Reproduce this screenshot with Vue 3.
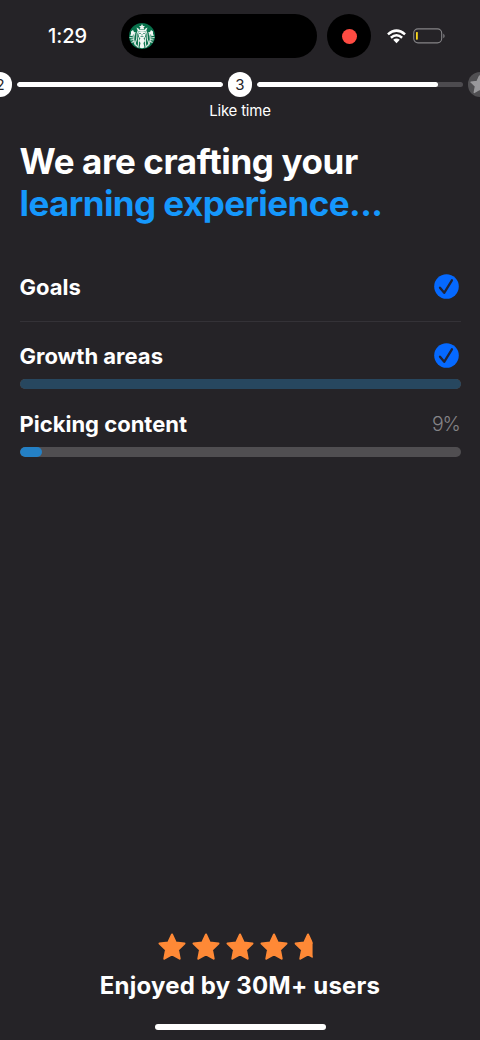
<script setup>
const tasks = [
  { name: 'Goals', kind: 'goals', done: true },
  { name: 'Growth areas', kind: 'growth', done: true, progress: 100 },
  { name: 'Picking content', kind: 'picking', done: false, progress: 5 },
]
const star = 'M14 1.500 17.700 9.500 26.500 10.500 20 16.700 21.700 25.700 14 21.300 6.300 25.700 8 16.700 1.500 10.500 10.300 9.500Z'
</script>

<template>
  <main class="screen">
    <header class="status">
      <span class="time">1:29</span>
      <div class="island">
        <svg class="logo" viewBox="0 0 52 52">
          <circle cx="26" cy="26" r="26" fill="#08704b" />
          <g fill="none" stroke="#d9e9e1" stroke-width="2.2">
            <path d="M18 16C13 24 18 29 14 36S15 45 19 49M34 16c5 8 0 13 4 20s-1 9-5 13" />
            <path d="M20 28c-3 6 1 9-2 19M32 28c3 6-1 9 2 19M12 21c-4 6-3 18 1 24M40 21c4 6 3 18-1 24" />
            <path d="M2 24l7 2M1 29l8 1M3 34l7-1M5 39l6-3M50 24l-7 2M51 29l-8 1M49 34l-7-1M47 39l-6-3" />
          </g>
          <g fill="#f2f7f4">
            <path d="M26 2l2 4h4l-3 3 2 4h-10l2-4-3-3h4zM15 9l4 2 2 3h10l2-3 4-2-3 8H18z" />
            <path d="M4 17l4-3 2 4 4 1-4 4-6 2zM48 17l-4-3-2 4-4 1 4 4 6 2z" />
            <path d="M18 19q8-5 16 0l-2 9q-6 7-12 0z" />
            <path d="M22 31q4-3 8 0l2 5-3 4 2 9q-5 3-10 0l2-9-3-4z" />
          </g>
          <path d="M20 21h4M28 21h4M26 22v3M23 27h6" stroke="#08704b" stroke-width="1.3" />
        </svg>
      </div>
      <div class="recorder"><i></i></div>
      <svg class="wifi" viewBox="0 0 20 15">
        <g fill="none" stroke="#fff" stroke-width="2.7">
          <path d="M1 5.3Q10-2.7 19 5.3" />
          <path d="M4.1 8.8Q10 3.6 15.900 8.800" />
        </g>
        <path d="M6.500 11Q10 8 13.500 11L10 14.700Z" fill="#fff" />
      </svg>
      <svg class="battery" viewBox="0 0 32 16">
        <rect x=".7" y=".9" width="28" height="14" rx="4.300" fill="none" stroke="#858487" stroke-width="1.100" />
        <rect x="3" y="4" width="1.800" height="7.700" rx=".6" fill="#fbd81e" />
        <path d="M30.300 5.600q2.700 2.300 0 4.600z" fill="#858487" />
      </svg>
    </header>

    <nav class="steps">
      <span class="step">2</span>
      <div class="line"><i class="full"></i></div>
      <span class="step">3</span>
      <div class="line"><i class="partial"></i></div>
      <span class="step upcoming">
        <svg viewBox="0 0 28 28"><path :d="star" fill="#99989b" stroke="#99989b" stroke-width="2" stroke-linejoin="round" /></svg>
      </span>
    </nav>
    <p class="step-name">Like time</p>

    <h1>We are crafting your<br /><span>learning experience...</span></h1>

    <section class="tasks">
      <article v-for="task in tasks" :key="task.kind" class="task" :class="task.kind">
        <div class="row">
          <h2>{{ task.name }}</h2>
          <svg v-if="task.done" class="check" viewBox="0 0 25 25">
            <circle cx="12.500" cy="12.500" r="12.300" fill="#0569ff" />
            <path d="M6 13.700 10.200 18.800 17.900 6.300" fill="none" stroke="#202436" stroke-width="2.300" stroke-linecap="round" stroke-linejoin="round" />
          </svg>
          <span v-else class="percent">9%</span>
        </div>
        <div v-if="task.progress" class="bar"><i :style="{ width: task.progress + '%' }"></i></div>
      </article>
    </section>

    <footer>
      <div class="stars">
        <svg v-for="n in 5" :key="n" viewBox="0 0 28 28" :class="{ cut: n === 5 }">
          <path :d="star" fill="#ff8936" stroke="#ff8936" stroke-width="2" stroke-linejoin="round" />
        </svg>
      </div>
      <p class="enjoyed">Enjoyed by 30M+ users</p>
      <div class="home"></div>
    </footer>
  </main>
</template>

<style>
body { background: #252327; }
</style>

<style scoped>
* { box-sizing: border-box; margin: 0; }
svg { display: block; flex: none; }
.screen { width: 480px; height: 1040px; overflow: hidden; display: flex; flex-direction: column; background: #252327; color: #fff; font-family: Inter, sans-serif; }
.status { height: 72px; padding-left: 48px; display: flex; align-items: center; flex: none; }
.time { width: 73px; font-size: 20px; font-weight: 500; letter-spacing: -.1px; }
.island { width: 196px; height: 44px; padding: 9px 8px; border-radius: 22px; background: #000; }
.logo { width: 26px; height: 26px; }
.recorder { width: 44px; height: 44px; margin-left: 10px; border-radius: 50%; background: #000; display: grid; place-items: center; }
.recorder i { width: 15px; height: 15px; border-radius: 50%; background: #ff4b42; }
.wifi { width: 19px; height: 15px; margin-left: 16px; }
.battery { width: 32px; height: 16px; margin-left: 7px; }
.steps { width: 504.500px; margin-left: -12.300px; display: flex; align-items: center; gap: 5px; flex: none; }
.step { width: 24.500px; height: 24.500px; flex: none; border-radius: 50%; background: #fff; color: #252327; display: grid; place-items: center; font-size: 15px; }
.upcoming { background: #504f52; }
.upcoming svg { width: 19px; height: 19px; }
.line { flex: 1; height: 5.500px; border-radius: 3px; background: #4d4b4f; overflow: hidden; }
.line i { display: block; height: 100%; background: #fff; border-radius: 3px; }
.full { width: 100%; }
.partial { width: 88%; }
.step-name { margin-top: 5px; text-align: center; font-size: 15px; line-height: 18px; letter-spacing: -.2px; }
h1 { margin: 20px 0 0 19.500px; font-size: 35px; line-height: 42px; font-weight: 700; white-space: nowrap; letter-spacing: -.4px; }
h1 span { color: #1598fc; letter-spacing: -.57px; }
.tasks { margin: 35px 19.500px 0; }
.row { display: flex; justify-content: space-between; align-items: center; height: 32px; }
h2 { font-size: 22px; line-height: 32px; font-weight: 700; }
.check { width: 25px; height: 25px; margin-right: 2px; }
.percent { color: #858487; font-size: 19.500px; font-weight: 300; margin-right: 1px; letter-spacing: -1.200px; }
.goals { height: 63px; padding-top: 12px; border-bottom: 1px solid #343237; }
.growth { height: 80px; padding-top: 18px; }
.picking { padding-top: 6px; }
.bar { height: 10px; border-radius: 5px; background: #504e51; overflow: hidden; margin-top: 7px; }
.bar i { display: block; height: 100%; border-radius: 5px; background: #2480c5; }
.growth .bar i { background: #27475f; }
footer { margin-top: auto; display: flex; flex-direction: column; align-items: center; }
.stars { display: flex; gap: 6.200px; }
.stars svg { width: 28px; height: 28px; }
.cut { clip-path: inset(0 9.800px 0 0); }
.enjoyed { margin-top: 9px; font-size: 24px; line-height: 32px; font-weight: 700; letter-spacing: .2px; white-space: nowrap; }
.home { width: 171px; height: 6px; margin: 22px 0 10px; border-radius: 3px; background: #fff; }
</style>
